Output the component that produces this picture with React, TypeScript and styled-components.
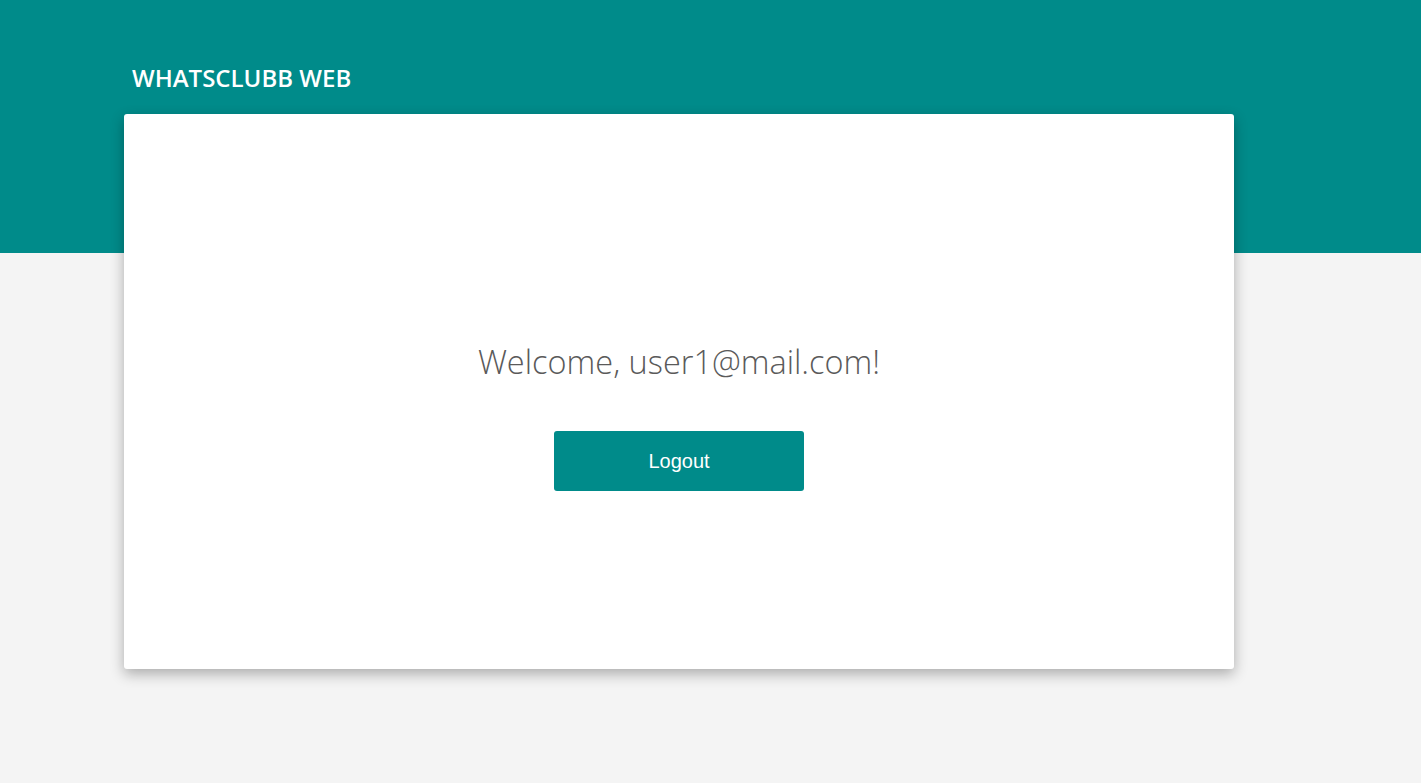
import React from "react";
import styled, { createGlobalStyle } from "styled-components";

const GlobalStyle = createGlobalStyle`
  html, body {
    margin: 0;
    padding: 0;
    background: #f4f4f4;
  }
  * { box-sizing: border-box; }
`;

const Page = styled.div`
  min-height: 783px;
  background: linear-gradient(to bottom, #008b8a 0, #008b8a 253px, #f4f4f4 253px);
  padding-top: 62px;
`;

const Container = styled.div`
  margin-left: 124px;
  width: 1110px;
`;

const Title = styled.h1`
  margin: 0 0 20px 8px;
  height: 32px;
  line-height: 32px;
  font-family: "Open Sans", "Noto Sans", sans-serif;
  font-weight: 600;
  font-size: 24px;
  color: #ffffff;
  letter-spacing: 0;
`;

const Card = styled.div`
  height: 555px;
  background: #ffffff;
  border-radius: 3px;
  box-shadow: 0 5px 14px rgba(0, 0, 0, 0.3);
  display: flex;
  flex-direction: column;
  align-items: center;
  padding-top: 226px;
`;

const Welcome = styled.h2`
  margin: 0;
  height: 44px;
  line-height: 44px;
  font-family: "Open Sans", "Noto Sans", sans-serif;
  font-weight: 300;
  font-size: 32.5px;
  color: #5a5a5a;
`;

const LogoutButton = styled.button`
  margin-top: 47px;
  width: 250px;
  height: 60px;
  border: none;
  border-radius: 3px;
  background: #008b8a;
  color: #ffffff;
  font-family: "Liberation Sans", Arial, sans-serif;
  font-size: 20px;
  cursor: pointer;
`;

export default function App() {
  return (
    <>
      <GlobalStyle />
      <Page>
        <Container>
          <Title>WHATSCLUBB WEB</Title>
          <Card>
            <Welcome>Welcome, user1@mail.com!</Welcome>
            <LogoutButton>Logout</LogoutButton>
          </Card>
        </Container>
      </Page>
    </>
  );
}
